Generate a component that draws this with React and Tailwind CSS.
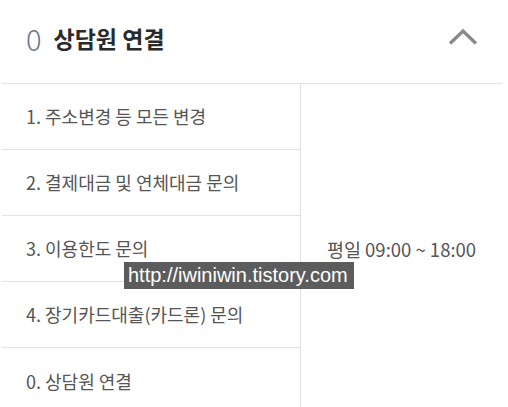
import React from 'react';

const items = [
  '1. 주소변경 등 모든 변경',
  '2. 결제대금 및 연체대금 문의',
  '3. 이용한도 문의',
  '4. 장기카드대출(카드론) 문의',
  '0. 상담원 연결',
];

const App = () => {
  return (
    <div
      className="relative w-[508px] h-[407px] overflow-hidden bg-white"
      style={{ fontFamily: '"Noto Sans CJK KR", "Noto Sans", sans-serif' }}
    >
      <div className="mx-[2px] w-[500px]">
        {/* header */}
        <div className="h-[83px] flex items-center justify-between pl-[24px] pr-[24px] pb-[6px]">
          <div className="flex items-center gap-[12px]">
            <span className="text-[29px] font-light text-[#6b7a8d] leading-none">0</span>
            <span className="text-[23px] font-bold text-[#2a2a2a] leading-none">상담원 연결</span>
          </div>
          <svg width="30" height="18" viewBox="0 0 30 18" className="mt-[-4px]">
            <path d="M2 15.5 L15 3 L28 15.5" fill="none" stroke="#8a8a8a" strokeWidth="3.4" />
          </svg>
        </div>

        {/* body */}
        <div className="flex border-t border-[#dde3ea]">
          <div className="w-[299px] border-r border-[#dde3ea]">
            {items.map((t, i) => (
              <div
                key={i}
                className={`h-[66px] flex items-center pl-[24px] text-[18px] text-[#555] ${i < items.length - 1 ? 'border-b border-[#dde3ea]' : ''}`}
              >
                {t}
              </div>
            ))}
          </div>
          <div className="flex-1 flex items-center justify-center text-[18.5px] text-[#555] pt-[2px]">
            평일 09:00 ~ 18:00
          </div>
        </div>
      </div>

      {/* watermark */}
      <div
        className="absolute left-[124px] top-[262px] w-[230px] h-[27px] bg-[#5c5c5c] text-white text-[20px] leading-[27px] pl-[4px] whitespace-nowrap"
        style={{ fontFamily: '"Liberation Sans", Arial, sans-serif' }}
      >
        http://iwiniwin.tistory.com
      </div>
    </div>
  );
};

export default App;
